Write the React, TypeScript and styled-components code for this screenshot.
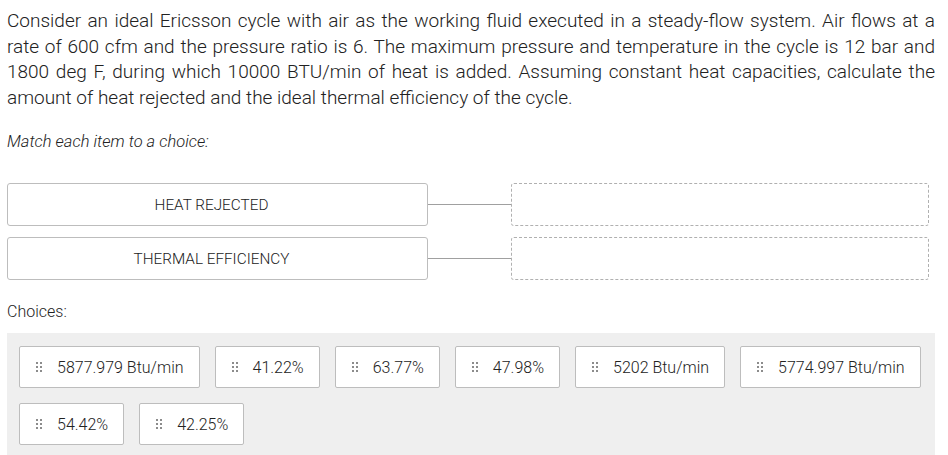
import * as React from "react";
import styled, { createGlobalStyle } from "styled-components";

const GlobalStyle = createGlobalStyle`
  html, body {
    margin: 0;
    padding: 0;
    background: #ffffff;
  }
  body {
    font-family: "Roboto Light", Roboto, "Liberation Sans", Arial, sans-serif;
    font-weight: 300;
    color: #222;
  }
`;

const Page = styled.div`
  padding: 8px 13px 0 7px;
  width: 948px;
  box-sizing: border-box;
`;

const Question = styled.p`
  margin: 0;
  font-size: 19px;
  line-height: 25.5px;
  text-align: justify;
`;

const Instruction = styled.p`
  margin: 21px 0 0;
  font-size: 16.5px;
  font-style: italic;
  line-height: 21px;
`;

const Pairs = styled.div`
  margin-top: 31px;
  display: flex;
  flex-direction: column;
  gap: 11px;
  padding-right: 6px;
`;

const PairRow = styled.div`
  display: flex;
  align-items: stretch;
  height: 43px;
`;

const ItemBox = styled.div`
  width: 421px;
  box-sizing: border-box;
  border: 1px solid #bdbdbd;
  border-radius: 3px;
  display: flex;
  align-items: center;
  justify-content: center;
  padding-right: 12px;
  font-size: 15.3px;
  text-transform: uppercase;
  color: #222;
`;

const Connector = styled.div`
  width: 83px;
  display: flex;
  align-items: center;

  &::before {
    content: "";
    display: block;
    width: 100%;
    height: 1px;
    background: #a0a0a0;
  }
`;

const DropZone = styled.div`
  flex: 1;
  box-sizing: border-box;
  border: 1px dashed #b0b0b0;
  border-radius: 3px;
`;

const ChoicesLabel = styled.div`
  margin-top: 22px;
  font-size: 16px;
  line-height: 20px;
`;

const ChoiceTray = styled.div`
  margin-top: 11px;
  background: #efefef;
  padding: 13px 12px 14px;
  display: flex;
  flex-wrap: wrap;
  gap: 15px 15px;
  min-height: 140px;
  box-sizing: border-box;
  align-content: flex-start;
`;

const Chip = styled.div`
  height: 42px;
  box-sizing: border-box;
  background: #fff;
  border: 1px solid #bdbdbd;
  border-radius: 2px;
  display: flex;
  align-items: center;
  padding: 0 15px 0 16px;
  gap: 15px;
  font-size: 16px;
  color: #222;
`;

const Grip = () => (
  <svg width="6" height="10" viewBox="0 0 6 10" aria-hidden="true">
    {[0, 1].map((c) =>
      [0, 1, 2].map((r) => (
        <rect key={`${c}-${r}`} x={c * 4} y={r * 4} width="2" height="2" fill="#8c8c8c" />
      ))
    )}
  </svg>
);

const items = ["Heat Rejected", "Thermal Efficiency"];

const choices = [
  "5877.979 Btu/min",
  "41.22%",
  "63.77%",
  "47.98%",
  "5202 Btu/min",
  "5774.997 Btu/min",
  "54.42%",
  "42.25%",
];

export default function App() {
  return (
    <>
      <GlobalStyle />
      <Page>
        <Question>
          Consider an ideal Ericsson cycle with air as the working fluid executed in a
          steady-flow system. Air flows at a rate of 600 cfm and the pressure ratio is 6. The
          maximum pressure and temperature in the cycle is 12 bar and 1800 deg F, during which
          10000 BTU/min of heat is added. Assuming constant heat capacities, calculate the
          amount of heat rejected and the ideal thermal efficiency of the cycle.
        </Question>
        <Instruction>Match each item to a choice:</Instruction>
        <Pairs>
          {items.map((item) => (
            <PairRow key={item}>
              <ItemBox>{item}</ItemBox>
              <Connector />
              <DropZone />
            </PairRow>
          ))}
        </Pairs>
        <ChoicesLabel>Choices:</ChoicesLabel>
        <ChoiceTray>
          {choices.map((c) => (
            <Chip key={c}>
              <Grip />
              {c}
            </Chip>
          ))}
        </ChoiceTray>
      </Page>
    </>
  );
}
